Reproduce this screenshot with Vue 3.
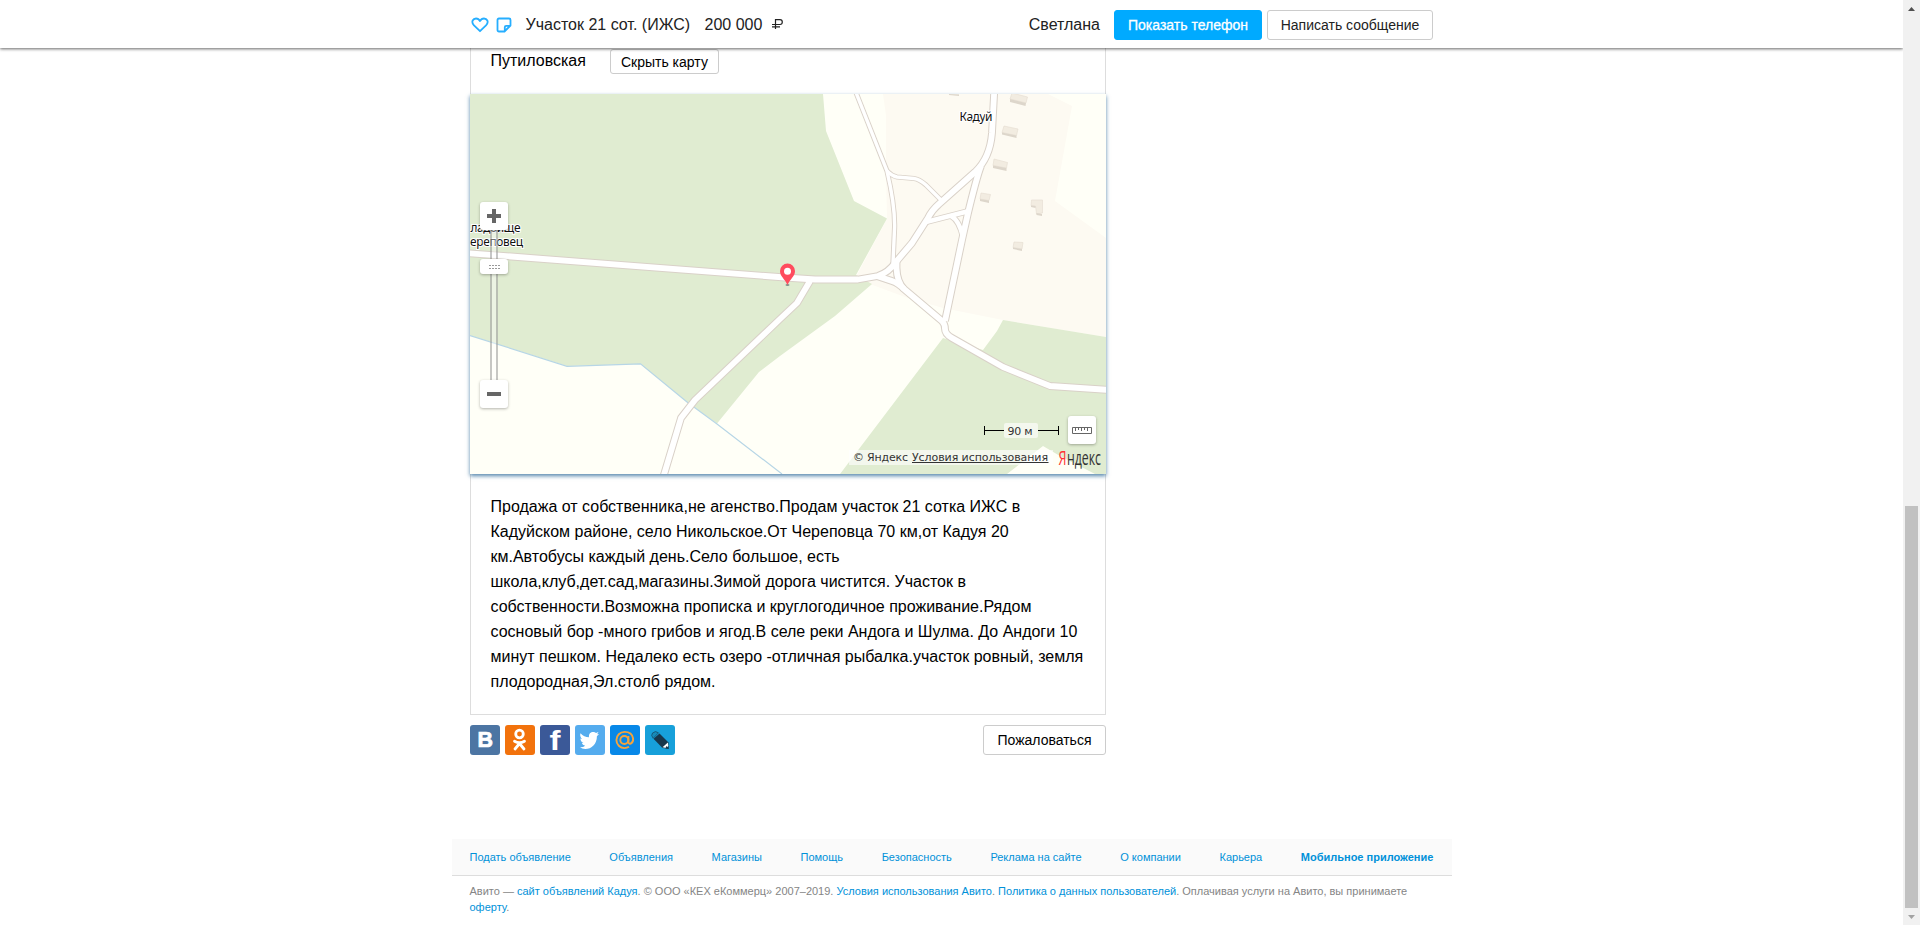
<script setup>
const navLinks = ['Подать объявление', 'Объявления', 'Магазины', 'Помощь', 'Безопасность', 'Реклама на сайте', 'О компании', 'Карьера']

const description = [
  'Продажа от собственника,не агенство.Продам участок 21 сотка ИЖС в',
  'Кадуйском районе, село Никольское.От Череповца 70 км,от Кадуя 20',
  'км.Автобусы каждый день.Село большое, есть',
  'школа,клуб,дет.сад,магазины.Зимой дорога чистится. Участок в',
  'собственности.Возможна прописка и круглогодичное проживание.Рядом',
  'сосновый бор -много грибов и ягод.В селе реки Андога и Шулма. До Андоги 10',
  'минут пешком. Недалеко есть озеро -отличная рыбалка.участок ровный, земля',
  'плодородная,Эл.столб рядом.',
]

const wideRoads = [
  'M466 253 L785 277.5 L815 279.5 H858 L878 276 Q889 272 895 263 L912 243 L928 218 Q932 210 939 204 L975 172 Q990 158 992 133 L994.3 90',
  'M981 166 Q977 176 968 213 L962 240 L945 321',
  'M896.5 260 V268 Q897 282 904 289 L942 321 Q945 324 945 329 Q945 334 952 338 L1003 367 L1050 386 L1110 390',
  'M877 276 L892 281 Q898 283 904 289',
  'M810 281 L797 303 L780 319 L695 400 L681 418 L663 478',
]
const midRoads = [
  'M926 222 L967 211.5',
  'M951 216 Q959 220 963 237',
]
const thinRoads = [
  'M855 90 L887 171 Q895 205 894.6 227 L893 263',
  'M887 171 Q892 176 897 177 L914 178.5 Q919 179 926 185 L941 200',
]
const buildings = [
  { top: 'M1012 93 L1027.500 97 L1026 103 L1010 99 Z', side: 'M1010 99 L1026 103 L1025.500 106 L1010 102 Z' },
  { top: 'M1004 126 L1018 129 L1016.500 135.500 L1002 132.500 Z', side: 'M1002 132.500 L1016.500 135.500 V138 L1002 134.500 Z' },
  { top: 'M994 159 L1007.500 162.500 L1006.500 168 L993 165.500 Z', side: 'M993 165.500 L1006.500 168 V171 L993 168 Z' },
  { top: 'M981 193 L990.500 194.500 L989 200.500 L980 199 Z', side: 'M980 199 L989 200.500 V203 L980 201 Z' },
  { top: 'M1031.500 200 H1042.500 V213 L1036.500 214 L1035.500 206 L1031 205.500 Z', side: 'M1031 205.500 L1035.500 206 V208 L1031 207 Z M1036.500 213 L1042 214 V216 L1036.500 215 Z' },
  { top: 'M1014 242 L1023 242.500 L1022 249 L1013 247.500 Z', side: 'M1013 247.500 L1022 249 V251 L1013 249 Z' },
  { top: 'M949 92 H959 V94 H949 Z', side: 'M949 94 L959 94.500 V96 L949 95 Z' },
]
</script>

<template>
  <div class="page">
    <div class="viewport">
      <header class="topbar">
        <div class="topbar-inner">
          <svg class="ic heart" viewBox="0 0 18 16"><path d="M9 14.2 L3 8.300 C-.5 4.600 2.300 1.500 5 1.500 C7 1.500 8.300 2.700 9 4 C9.700 2.700 11 1.500 13 1.500 C15.700 1.500 18.500 4.600 15 8.300 Z" /></svg>
          <svg class="ic note" viewBox="0 0 16 16"><path d="M3 1.500 H13 Q14.500 1.500 14.500 3 V8.500 L8.500 14.500 H3 Q1.500 14.500 1.500 13 V3 Q1.500 1.500 3 1.500 Z M8.800 14 V10.200 Q8.800 8.800 10.200 8.800 H14.200" /></svg>
          <span class="title">Участок 21 сот. (ИЖС)</span>
          <span class="price">200 000</span>
          <svg class="ruble" viewBox="0 0 11 10"><path d="M3.500 10 V.7 H8 Q10.300 .7 10.300 3 Q10.300 5.500 8 5.500 H0 M0 7.900 H8" /></svg>
          <span class="seller">Светлана</span>
          <button class="btn primary">Показать телефон</button>
          <button class="btn message">Написать сообщение</button>
        </div>
      </header>

      <main class="content">
        <section class="item">
          <div class="address">
            <span>Путиловская</span>
            <button class="btn small">Скрыть карту</button>
          </div>

          <div class="map">
            <svg class="map-canvas" viewBox="470 94 636 380">
              <rect x="470" y="94" width="636" height="380" fill="#fffff7" />
              <path fill="#fdfaf2" d="M883 94 L886 115 V170 L887 219 L857 275 L870 284 L905 297 L943 308 L1003 320 L1106 337 V238 L1055 201 L1072 106 L1048 94 Z" />
              <path fill="#e0ecd1" d="M470 94 H823 L826 131 L854 201 L887 218.500 L856 275 L872 284 L835 316 L780 356 L759 372 L717 423.500 L687 402 L640.500 364 L567 366 L470 335.500 Z" />
              <path fill="#e0ecd1" d="M1003 320 L1106 337 V474 H840 L943 338 L983 350 L997 331 Z" />
              <path fill="#fffff7" d="M1007 474 L1043 446 L1060 456 L1095 474 Z" />
              <path class="river" d="M470 335.500 L567 366.300 L640.500 363.800 L687 402 L717 424 L782 474" />
              <g class="roads">
                <g class="casing">
                  <path v-for="d in wideRoads" :key="d" class="wide" :d="d" />
                  <path v-for="d in midRoads" :key="d" class="mid" :d="d" />
                  <path v-for="d in thinRoads" :key="d" class="thin" :d="d" />
                </g>
                <g class="surface">
                  <path v-for="d in wideRoads" :key="d" class="wide" :d="d" />
                  <path v-for="d in midRoads" :key="d" class="mid" :d="d" />
                  <path v-for="d in thinRoads" :key="d" class="thin" :d="d" />
                </g>
              </g>
              <g v-for="b in buildings" :key="b.top">
                <path :d="b.top" fill="#f2ece1" stroke="#e4dcd0" stroke-width=".6" />
                <path :d="b.side" fill="#ddd6cb" />
              </g>
              <text class="place" x="959.500" y="121" textLength="33">Кадуй</text>
              <text class="place" x="470.500" y="232" textLength="50">ладбище</text>
              <text class="place" x="470" y="245.500" textLength="53">ереповец</text>
              <ellipse cx="787.500" cy="285" rx="2" ry="1" fill="#7d918b" />
              <path fill="#ff4c5e" d="M787.500 285 C785 279 780 276.500 780 271 A7.500 7.500 0 0 1 795 271 C795 276.500 790 279 787.500 285 Z" />
              <circle cx="787.500" cy="271.300" r="3.500" fill="#fff" />
              <g class="scale-line">
                <path d="M984.500 426 V435 M984.500 430.500 H1058.500 M1058.500 426 V435" />
                <rect x="1004" y="423" width="34" height="15" rx="2" />
                <text x="1007.500" y="435" textLength="25">90 м</text>
              </g>
              <rect x="849" y="450" width="204" height="15" fill="#fff" opacity=".6" />
              <text class="legal" x="853" y="461" textLength="55">© Яндекс</text>
              <text class="legal" x="912" y="461" textLength="136">Условия использования</text>
              <path d="M912 462.500 H1048.500" stroke="#333" />
              <text class="brand red" x="1058.500" y="465" textLength="8" lengthAdjust="spacingAndGlyphs">Я</text>
              <text class="brand" x="1067" y="465" textLength="34" lengthAdjust="spacingAndGlyphs">ндекс</text>
            </svg>

            <div class="zoom-control">
              <div class="key"><svg viewBox="0 0 28 28"><path d="M7 14 H21 M14 7 V21" /></svg></div>
              <div class="track"><div class="thumb"><svg viewBox="0 0 28 15"><path d="M9 6.500 H20 M9 9.500 H20" /></svg></div></div>
              <div class="key"><svg viewBox="0 0 28 28"><path d="M7 14 H21" /></svg></div>
            </div>
            <div class="ruler"><svg viewBox="0 0 28 28"><path d="M4.500 11.500 H23.500 V17.500 H4.500 Z M7.500 12 V15 M10.500 12 V14 M13.500 12 V15 M16.500 12 V14 M19.500 12 V15" /></svg></div>
          </div>

          <div class="description">
            <div v-for="line in description" :key="line">{{ line }}</div>
          </div>
        </section>

        <div class="actions">
          <svg class="social vk" viewBox="0 0 30 30"><text x="7.600" y="22" font-size="22.500" textLength="15.500" lengthAdjust="spacingAndGlyphs">В</text></svg>
          <svg class="social ok" viewBox="0 0 30 30"><circle cx="14.500" cy="9" r="3.800" class="ln" /><path class="ln" d="M9.500 16.300 Q14.500 19.200 19.500 16.300 M14.500 18.500 L10 24 M14.500 18.500 L19 24" /></svg>
          <svg class="social fb" viewBox="0 0 30 30"><text x="9.400" y="25" font-size="28" textLength="11" lengthAdjust="spacingAndGlyphs">f</text></svg>
          <svg class="social tw" viewBox="0 0 30 30"><path fill="#fff" d="M5.500 8.200 Q9 12 14 12.300 C13.500 8.500 16 6.700 18.500 6.900 Q20 7 21 8 L23.500 7 L22.200 9.300 L24 8.900 L21.900 11.200 C22 19 16.500 24 10.300 24 Q7 24 5 22.300 Q8 22.500 10.200 20.800 Q7.500 20.300 6.800 18 H8.500 Q5.500 16.800 5.400 13.600 L7.100 14 Q4.400 11.500 5.500 8.200 Z" /></svg>
          <svg class="social mail" viewBox="0 0 30 30"><circle cx="14.300" cy="15" r="4" /><path d="M18.400 11 V17 Q18.600 19.300 20.700 18.600 Q23.500 17 23.100 13.500 C22.400 9 18.800 6.900 14.500 6.900 A8.100 8.100 0 0 0 14.500 23.100 Q17 23.100 19 21.800" /></svg>
          <svg class="social lj" viewBox="0 0 30 30"><path fill="#17374c" d="M14.500 8.500 L23.500 17.500 L23.800 23.800 L17.500 23 L8.500 13.800 Z" /><path fill="#fff" d="M17.500 22.300 L22.900 17.400 L23.300 21 L21.300 23 Z" /><path fill="#17374c" d="M21.200 21 L24 23.800 L20.500 23.500 Z" /><path fill="#168bb9" stroke="#17374c" stroke-width=".6" d="M13.500 7.800 Q10.500 5.300 7.500 8 Q5.500 10.500 8.200 13.300 Z" /></svg>
          <button class="btn complain">Пожаловаться</button>
        </div>
      </main>

      <footer class="footer">
        <nav>
          <a v-for="l in navLinks" :key="l">{{ l }}</a>
          <a class="strong">Мобильное приложение</a>
        </nav>
        <p>Авито — <a>сайт объявлений Кадуя</a>. © ООО «КЕХ еКоммерц» 2007–2019. <a>Условия использования Авито</a>. <a>Политика о данных пользователей</a>. Оплачивая услуги на Авито, вы принимаете<br /><a>оферту</a>.</p>
      </footer>
    </div>

    <div class="scrollbar">
      <svg viewBox="0 0 17 17"><path fill="#505050" d="M5 11 H12 L8.500 7 Z" /></svg>
      <div class="handle"></div>
      <svg viewBox="0 0 17 17"><path fill="#a3a3a3" d="M5 7 H12 L8.500 11 Z" /></svg>
    </div>
  </div>
</template>

<style>
body { margin: 0; overflow: hidden; background: #fff; }
</style>

<style scoped>
* { box-sizing: border-box; }
.page {
  display: flex;
  width: 1920px;
  height: 925px;
  overflow: hidden;
  font-family: "Liberation Sans", Arial, sans-serif;
  font-size: 16px;
  color: #000;
}
.viewport { width: 1903px; height: 925px; display: flex; flex-direction: column; overflow: hidden; }
.topbar {
  position: relative;
  z-index: 2;
  flex: none;
  height: 48px;
  background: #fff;
  box-shadow: 0 1px 3px rgba(0, 0, 0, .6);
}
.topbar-inner {
  display: flex;
  align-items: center;
  width: 963px;
  height: 48px;
  margin-left: 470px;
  padding-top: 2px;
  white-space: nowrap;
}
.ic { fill: none; stroke: #26aeff; stroke-width: 1.8; stroke-linejoin: round; flex: none; }
.heart { width: 18px; height: 16px; margin-left: 1px; }
.note { width: 16px; height: 16px; margin-left: 7px; }
.title { width: 166px; margin-left: 13.500px; color: #222; }
.price { margin-left: 13px; color: #222; }
.ruble { width: 11px; height: 10px; margin-left: 9.500px; margin-top: -2px; fill: none; stroke: #222; stroke-width: 1.2; }
.seller { margin-left: auto; margin-right: 14px; color: #222; }
.btn {
  height: 30px;
  padding: 0;
  border: 1px solid #ccc;
  border-radius: 3px;
  background: #fff;
  font: 14px/28px "Liberation Sans", Arial, sans-serif;
  color: #000;
  white-space: nowrap;
}
.primary { width: 148px; margin-right: 5px; border-color: #0af; background: #0af; color: #fff; -webkit-text-stroke: .3px #fff; }
.message { width: 166px; color: #222; }
.content { width: 636px; margin-left: 470px; flex: none; }
.item { height: 667px; border: 1px solid #ddd; border-top: 0; }
.address { display: flex; height: 46px; padding: 1px 0 0 19.500px; line-height: 23px; }
.small { width: 109px; height: 25px; margin-left: 24px; line-height: 22px; }
.map {
  position: relative;
  width: 636px;
  height: 380px;
  margin-left: -1px;
  box-shadow: 0 2px 4px rgba(30, 95, 145, .75);
}
.map-canvas { display: block; width: 636px; height: 380px; }
.river { fill: none; stroke: #b7d6e6; stroke-width: 1.2; }
.roads path { fill: none; stroke-linejoin: round; }
.casing { stroke: #d9d1c8; }
.surface { stroke: #fff; }
.casing .wide { stroke-width: 7.8; }
.surface .wide { stroke-width: 5.800; }
.casing .mid { stroke-width: 6.200; }
.surface .mid { stroke-width: 4.400; }
.casing .thin { stroke-width: 5.200; }
.surface .thin { stroke-width: 3.400; }
.place { font: 12px "Noto Sans", sans-serif; fill: #111; stroke: #fff; stroke-width: 2px; paint-order: stroke; }
.scale-line path { fill: none; stroke: #000; }
.scale-line rect { fill: #f4f8ee; }
.scale-line text, .legal { font: 11px "DejaVu Sans", sans-serif; fill: #333; }
.brand { font: 20px "Open Sans", "Noto Sans", sans-serif; fill: #333; }
.brand.red { fill: #f33; }
.zoom-control { position: absolute; left: 10px; top: 108px; width: 28px; }
.key, .thumb, .ruler { background: #fff; border-radius: 3px; box-shadow: 0 1px 3px rgba(0, 0, 0, .3); }
.key { position: relative; height: 28px; }
.key svg, .thumb svg, .ruler svg { display: block; width: 100%; height: 100%; fill: none; }
.key path { stroke: #666; stroke-width: 4; }
.track {
  width: 8px;
  height: 150px;
  margin-left: 10px;
  padding-top: 29px;
  border: solid rgba(80, 80, 80, .32);
  border-width: 0 2px;
  background: rgba(255, 255, 255, .4);
}
.thumb { width: 28px; height: 15px; margin-left: -12px; }
.thumb path { stroke: #999; stroke-dasharray: 2 1; }
.ruler { position: absolute; left: 598px; top: 322px; width: 28px; height: 28px; }
.ruler path { stroke: #666; }
.description { padding: 20px 0 0 19.500px; line-height: 25px; white-space: nowrap; }
.actions { display: flex; margin-top: 10px; gap: 5px; }
.social { width: 30px; height: 30px; border-radius: 3px; }
.social text { font-family: "Liberation Sans", sans-serif; font-weight: bold; fill: #fff; }
.vk { background: #4c75a3; }
.vk text { stroke: #fff; stroke-width: .7px; }
.ok { background: #f2720c; }
.fb { background: #3b5998; }
.tw { background: #55acee; }
.mail { background: #0788e8; fill: none; stroke: #f5a33b; stroke-width: 1.900; }
.lj { background: #17a0da; }
.ln { fill: none; stroke: #fff; stroke-width: 2.800; stroke-linecap: round; }
.complain { width: 123px; margin-left: auto; }
.footer { width: 1000px; margin: 84px 0 0 452px; font-size: 11px; color: #858585; }
.footer a { color: #0091d9; }
.footer nav {
  display: flex;
  justify-content: space-between;
  height: 37px;
  padding: 0 18.500px 0 17.500px;
  border-bottom: 1px solid #ddd;
  background: #fafafa;
  line-height: 37px;
  white-space: nowrap;
}
.footer .strong { font-weight: bold; }
.footer p { margin: 7px 0 0 17.500px; line-height: 16px; white-space: nowrap; }
.scrollbar { width: 17px; height: 925px; background: #f1f1f1; display: flex; flex-direction: column; }
.scrollbar svg { width: 17px; height: 17px; flex: none; }
.handle { width: 13px; height: 402px; margin: 489px 0 0 2px; background: #c1c1c1; }
</style>
